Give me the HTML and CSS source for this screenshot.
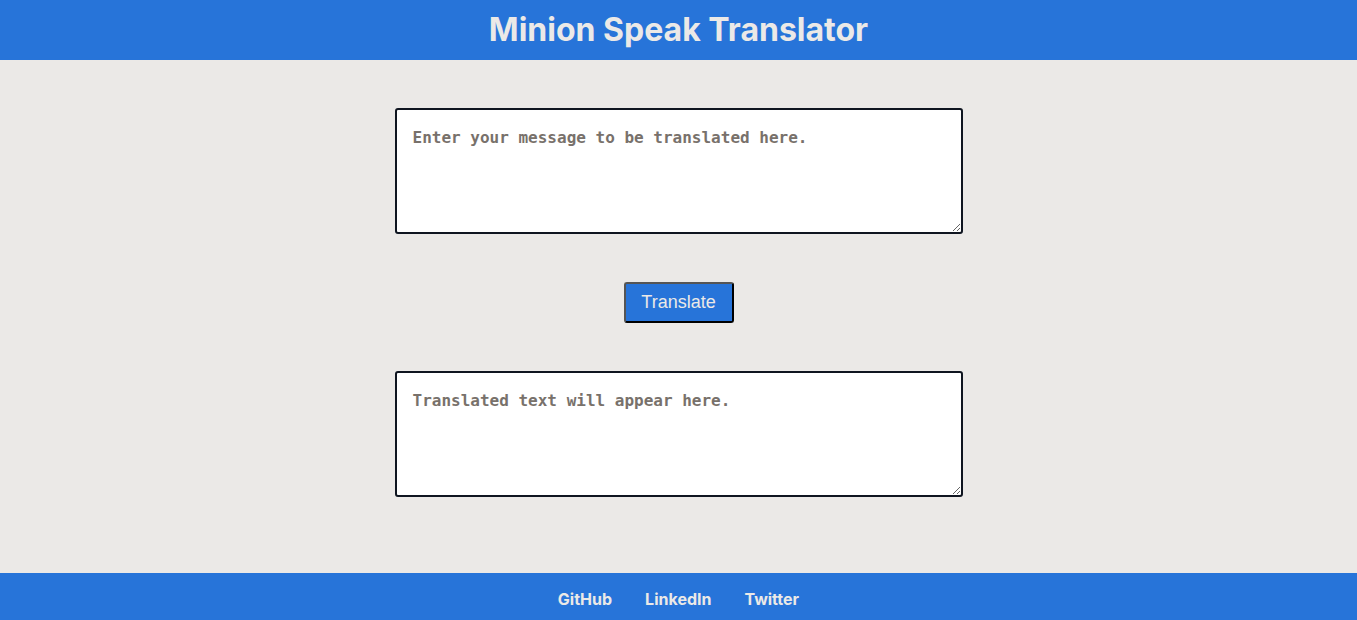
FILE: index.html
```html
<!DOCTYPE html>
<html lang="en">
<head>
<meta charset="utf-8">
<title>Minion Speak Translator</title>
<link rel="stylesheet" href="styles.css">
</head>
<body>
<header class="site-header">
  <h1 class="title">Minion Speak Translator</h1>
</header>
<main class="content">
  <textarea class="text-box" placeholder="Enter your message to be translated here."></textarea>
  <button class="btn-translate">Translate</button>
  <textarea class="text-box" placeholder="Translated text will appear here."></textarea>
</main>
<footer class="site-footer">
  <a class="footer-link" href="#">GitHub</a>
  <a class="footer-link" href="#">LinkedIn</a>
  <a class="footer-link" href="#">Twitter</a>
</footer>
</body>
</html>
```
FILE: styles.css
```css
html, body {
  margin: 0;
  padding: 0;
}
body {
  background: #ebe9e7;
  font-family: Inter, "Liberation Sans", sans-serif;
  min-height: 620px;
  display: flex;
  flex-direction: column;
}
.site-header {
  background: #2774d9;
  height: 60px;
  display: flex;
  align-items: center;
  justify-content: center;
}
.title {
  margin: 0;
  color: #ebe9e7;
  font-size: 32px;
  font-weight: 700;
  line-height: 1;
}
.content {
  flex: 1;
  display: flex;
  flex-direction: column;
  align-items: center;
  padding-top: 48px;
}
.text-box {
  box-sizing: border-box;
  width: 568px;
  height: 126px;
  border: 2px solid #0f1520;
  border-radius: 3px;
  background: #fff;
  padding: 18px 16px 16px;
  font-family: "DejaVu Sans Mono", monospace;
  font-weight: 700;
  font-size: 16px;
  color: #222;
  margin: 0;
}
.text-box::placeholder {
  color: #78716b;
}
.btn-translate {
  margin: 48px 0;
  box-sizing: border-box;
  width: 110px;
  height: 41px;
  background: #2774d9;
  color: #ebe9e7;
  border: 2px outset #555;
  border-radius: 3px;
  font-family: "Liberation Sans", Arial, sans-serif;
  font-size: 18px;
  padding: 0;
}
.site-footer {
  margin-top: auto;
  background: #2774d9;
  height: 47px;
  box-sizing: border-box;
  padding-top: 4px;
  display: flex;
  align-items: center;
  justify-content: center;
  gap: 33px;
}
.footer-link {
  color: #ebe9e7;
  text-decoration: none;
  font-weight: 700;
  font-size: 16px;
}
```
